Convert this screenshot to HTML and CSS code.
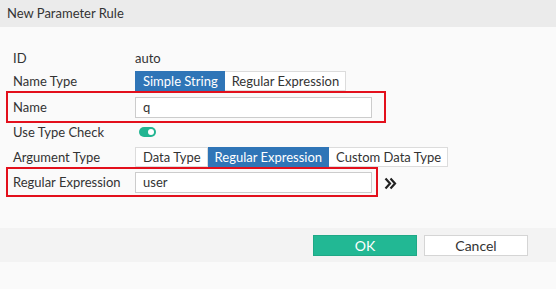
FILE: index.html
```html
<!DOCTYPE html>
<html lang="en">
<head>
<meta charset="UTF-8">
<title>New Parameter Rule</title>
<link rel="stylesheet" href="styles.css">
</head>
<body>

<div class="header">New Parameter Rule</div>

<div class="form">
  <div class="row row-id">
    <span class="label">ID</span>
    <span class="value">auto</span>
  </div>

  <div class="row row-btns">
    <span class="label">Name Type</span>
    <div class="btn-group">
      <span class="seg active">Simple String</span>
      <span class="seg">Regular Expression</span>
    </div>
  </div>

  <div class="row highlight box-name">
    <span class="label">Name</span>
    <input class="text-input" type="text" value="q">
  </div>

  <div class="row row-toggle">
    <span class="label">Use Type Check</span>
    <span class="toggle"><span class="knob"></span></span>
  </div>

  <div class="row row-btns row-arg">
    <span class="label">Argument Type</span>
    <div class="btn-group">
      <span class="seg">Data Type</span>
      <span class="seg active">Regular Expression</span>
      <span class="seg">Custom Data Type</span>
    </div>
  </div>

  <div class="regex-line">
    <div class="row highlight box-regex">
      <span class="label">Regular Expression</span>
      <input class="text-input" type="text" value="user">
    </div>
    <!-- double chevron -->
    <svg class="chevrons" width="13" height="13" viewBox="0 0 13 13">
      <path d="M1.5 1.5 L6 6.5 L1.5 11.5 M6.5 1.5 L11 6.5 L6.5 11.5" fill="none" stroke="#222" stroke-width="2.2"/>
    </svg>
  </div>
</div>

<div class="footer">
  <button class="btn btn-ok">OK</button>
  <button class="btn btn-cancel">Cancel</button>
</div>

</body>
</html>
```

FILE: styles.css
```css
body {
  margin: 0;
  background-color: #fafafa;
  font-family: 'Lato', 'Liberation Sans', sans-serif;
  font-size: 13px;
  color: #333;
}

.header {
  height: 27px;
  line-height: 27px;
  padding-left: 7px;
  background-color: #ebebeb;
  color: #333;
}

.form {
  padding-top: 19px;
}

.row {
  display: flex;
  align-items: center;
  padding-left: 13px;
}

.label {
  width: 122px;
  flex-shrink: 0;
}

.row-id {
  height: 24px;
}

.row-btns {
  height: 20px;
  margin-top: 1px;
}

.row-arg {
  margin-top: 7px;
}

.btn-group {
  display: flex;
  height: 20px;
}

.seg {
  display: flex;
  align-items: center;
  padding: 0 6px 0 7px;
  background-color: #fff;
  border: 1px solid #dcdcdc;
  border-left: none;
  box-sizing: border-box;
  height: 20px;
  color: #333;
}

.seg:first-child {
  border-left: 1px solid #dcdcdc;
}

.seg.active {
  background-color: #2f75b7;
  border-color: #2f75b7;
  color: #fff;
}

/* red outlined rows */
.highlight {
  box-sizing: border-box;
  margin-left: 6px;
  padding-left: 5px;
  border: 2px solid #e3101c;
}

.box-name {
  width: 380px;
  height: 32px;
}

.box-regex {
  width: 372px;
  height: 30px;
}

.text-input {
  box-sizing: border-box;
  width: 237px;
  height: 21px;
  border: 1px solid #ccc;
  background-color: #fff;
  padding: 0 7px;
  font-family: inherit;
  font-size: 13px;
  color: #333;
  outline: none;
}

.row-toggle {
  height: 17px;
}

.toggle {
  position: relative;
  display: inline-block;
  width: 17px;
  height: 10px;
  margin-left: 4px;
  border-radius: 5px;
  background-color: #22b592;
}

.knob {
  position: absolute;
  top: 2px;
  right: 2px;
  width: 6px;
  height: 6px;
  border-radius: 50%;
  background-color: #fff;
}

.regex-line {
  display: flex;
  align-items: center;
}

.chevrons {
  margin-left: 6px;
  margin-top: 2px;
}

.footer {
  margin-top: 31px;
  height: 34px;
  background-color: #f3f3f3;
  display: flex;
  justify-content: flex-end;
  align-items: flex-start;
  padding-top: 7px;
  padding-right: 28px;
  box-sizing: border-box;
  gap: 7px;
}

.btn {
  width: 104px;
  height: 21px;
  font-family: inherit;
  font-size: 14px;
  border: 1px solid #d5d5d5;
  padding: 0;
}

.btn-ok {
  background-color: #22b894;
  border-color: #1fa886;
  color: #fff;
}

.btn-cancel {
  background-color: #fff;
  color: #333;
}
```
